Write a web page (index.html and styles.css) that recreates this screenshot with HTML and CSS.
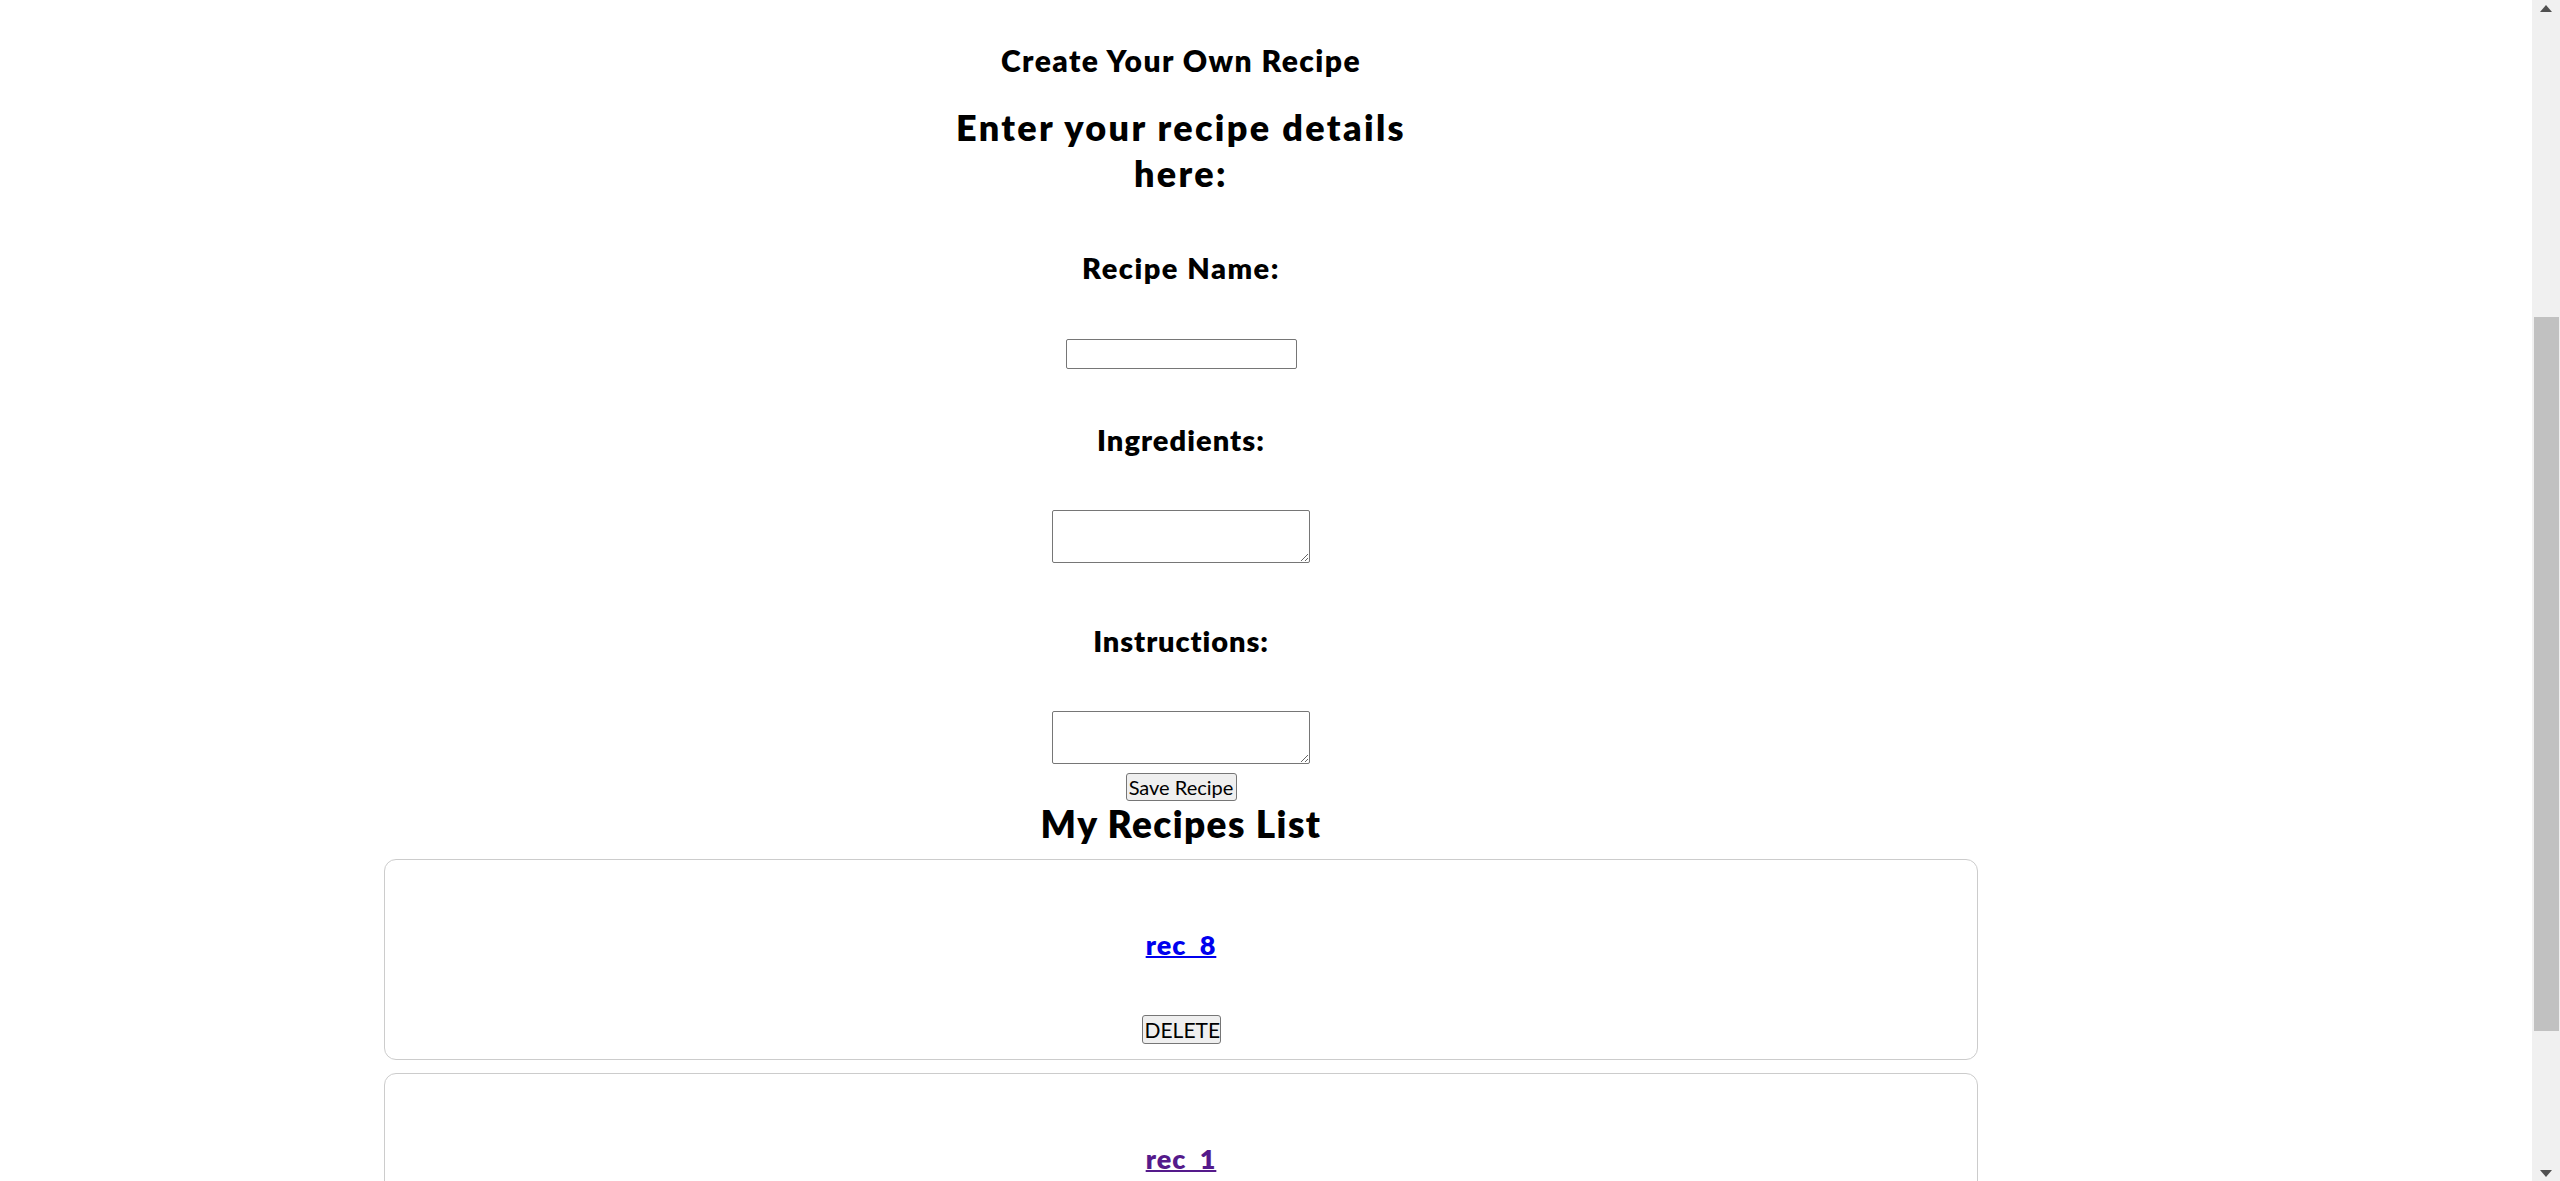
FILE: index.html
```html
<!DOCTYPE html>
<html lang="en">
<head>
<meta charset="utf-8">
<title>My Recipes</title>
<link rel="stylesheet" href="styles.css">
</head>
<body>
<main class="page">
  <section class="creator">
    <h1 class="creator-title">Create Your Own Recipe</h1>
    <form class="recipe-form">
      <h2 class="form-heading">Enter your recipe details here:</h2>
      <label class="field-label label-name" for="recipe-name">Recipe Name:</label>
      <input id="recipe-name" class="field-input" type="text">
      <label class="field-label label-ingredients" for="recipe-ingredients">Ingredients:</label>
      <textarea id="recipe-ingredients" class="field-area"></textarea>
      <label class="field-label label-instructions" for="recipe-instructions">Instructions:</label>
      <textarea id="recipe-instructions" class="field-area"></textarea>
      <button type="button" class="save-btn">Save Recipe</button>
    </form>
  </section>
  <section class="recipes">
    <h2 class="recipes-title">My Recipes List</h2>
    <ul class="recipe-list">
      <li class="recipe-card">
        <h3 class="recipe-name"><a href="#rec-8" class="recipe-link">rec 8</a></h3>
        <button type="button" class="delete-btn">DELETE</button>
      </li>
      <li class="recipe-card">
        <h3 class="recipe-name"><a href="#rec-1" class="recipe-link recipe-link-visited">rec 1</a></h3>
        <button type="button" class="delete-btn">DELETE</button>
      </li>
    </ul>
  </section>
</main>
<div class="scrollbar" aria-hidden="true">
  <div class="scroll-arrow scroll-arrow-up"></div>
  <div class="scroll-track"><div class="scroll-thumb"></div></div>
  <div class="scroll-arrow scroll-arrow-down"></div>
</div>
</body>
</html>
```

FILE: styles.css
```css
html {
  overflow: hidden;
}

body {
  margin: 0;
  background: #ffffff;
  color: #000000;
  font-family: "Lato", "Open Sans", sans-serif;
}

.page {
  width: 2362px;
  padding-top: 42px;
}

.creator {
  display: flex;
  flex-direction: column;
  align-items: center;
  text-align: center;
}

.creator-title {
  margin: 0;
  font-size: 30px;
  line-height: 36px;
  font-weight: 800;
  letter-spacing: 1.45px;
}

.recipe-form {
  width: 480px;
  display: flex;
  flex-direction: column;
  align-items: center;
  text-align: center;
}

.form-heading {
  margin: 26px 0 0;
  font-size: 36px;
  line-height: 46px;
  font-weight: 800;
  letter-spacing: 2.35px;
}

.field-label {
  display: block;
  font-size: 29px;
  line-height: 35px;
  font-weight: 800;
}

.label-name {
  margin-top: 54px;
  letter-spacing: 1.5px;
}

.label-ingredients {
  margin-top: 53px;
  letter-spacing: 1.05px;
}

.label-instructions {
  margin-top: 60px;
  letter-spacing: 0.9px;
}

.field-input,
.field-area {
  box-sizing: border-box;
  margin: 53px 0 0;
  border: 1px solid #767676;
  border-radius: 2px;
  background: #ffffff;
  padding: 2px;
  font: inherit;
}

.field-input {
  margin-top: 54px;
  width: 231px;
  height: 30px;
}

.field-area {
  width: 258px;
  height: 53px;
}

.save-btn,
.delete-btn {
  box-sizing: border-box;
  border: 1px solid #767676;
  border-radius: 3px;
  background: #efefef;
  color: #000000;
  padding: 0 2px;
  font-family: "Lato", "Open Sans", sans-serif;
}

.save-btn {
  margin-top: 9px;
  width: 111px;
  height: 28px;
  font-size: 20px;
}

.recipes {
  display: flex;
  flex-direction: column;
  align-items: center;
}

.recipes-title {
  margin: 1px 0 0;
  font-size: 37px;
  line-height: 44px;
  font-weight: 800;
  letter-spacing: 1.4px;
}

.recipe-list {
  list-style: none;
  margin: 13px 0 0;
  padding: 0;
  width: 1594px;
  display: flex;
  flex-direction: column;
  gap: 13px;
}

.recipe-card {
  border: 1px solid #cccccc;
  border-radius: 12px;
  padding: 69px 0 15px;
  display: flex;
  flex-direction: column;
  align-items: center;
}

.recipe-name {
  margin: 0;
  font-size: 27px;
  line-height: 32px;
  font-weight: 800;
}

.recipe-link {
  color: #0000ee;
  text-decoration: underline;
  text-decoration-thickness: 2px;
  letter-spacing: 1px;
  word-spacing: 6px;
}

.recipe-link-visited {
  color: #551a8b;
}

.delete-btn {
  margin-top: 54px;
  width: 79px;
  height: 29px;
  font-size: 21px;
}

.scrollbar {
  position: fixed;
  top: 0;
  right: 0;
  width: 28px;
  height: 100vh;
  background: #f0f0f0;
  display: flex;
  flex-direction: column;
  align-items: center;
}

.scroll-arrow {
  width: 0;
  height: 0;
  border-left: 6.5px solid transparent;
  border-right: 6.5px solid transparent;
}

.scroll-arrow-up {
  margin-top: 5px;
  border-bottom: 7px solid #505050;
}

.scroll-arrow-down {
  margin-bottom: 4px;
  border-top: 7px solid #505050;
}

.scroll-track {
  flex: 1;
  align-self: stretch;
  display: flex;
  flex-direction: column;
}

.scroll-thumb {
  margin: 305px 1px 0 2px;
  height: 714px;
  background: #c1c1c1;
}
```
